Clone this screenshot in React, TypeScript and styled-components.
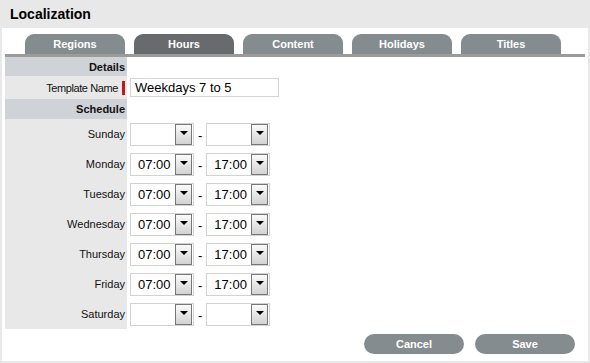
import { Fragment, useState } from "react";
import styled, { createGlobalStyle } from "styled-components";

const GlobalStyle = createGlobalStyle`
    html, body {
        margin: 0;
        padding: 0;
        background: #fff;
        font-family: "Liberation Sans", Arial, sans-serif;
    }
`

const Panel = styled.div`
    width: 590px;
    height: 363px;
    box-sizing: border-box;
    border: 2px solid #e8e8e8;
    border-top: none;
    display: flex;
    flex-direction: column;
    background: #fff;
`
const Header = styled.div`
    height: 28px;
    margin: 0 -2px;
    padding-left: 10px;
    background: #e8e8e8;
    font-size: 14px;
    font-weight: bold;
    line-height: 28px;
    color: #000;
`
const Content = styled.div`
    padding: 0 3px;
    display: flex;
    flex-direction: column;
`
const TabBar = styled.div`
    display: flex;
    gap: 9px;
    padding: 6px 0 0 20px;
    border-bottom: 3px solid #9b9b99;
`
const Tab = styled.div<{ $active?: boolean }>`
    width: 100px;
    height: 20px;
    border-radius: 9px 9px 0 0;
    background: ${(p) => (p.$active ? "#676b6e" : "#858c90")};
    color: #fff;
    font-size: 11px;
    font-weight: bold;
    line-height: 21px;
    text-align: center;
    cursor: pointer;
`
const Form = styled.div`
    display: grid;
    grid-template-columns: 122px 1fr;
`
const Label = styled.div<{ $section?: boolean; $h: number; $tight?: boolean }>`
    height: ${(p) => p.$h}px;
    background: ${(p) => (p.$section ? "#cfd2d6" : "#e8e8e8")};
    display: flex;
    align-items: center;
    justify-content: flex-end;
    gap: 4px;
    padding-right: 2px;
    font-size: 11px;
    font-weight: ${(p) => (p.$section ? "bold" : "normal")};
    letter-spacing: ${(p) => (p.$tight ? "-0.4px" : "0")};
    color: #111;
`
const Required = styled.span`
    width: 3px;
    height: 14px;
    background: #c0161c;
`
const Field = styled.div`
    display: flex;
    align-items: center;
    gap: 4px;
    padding-left: 3px;
`
const TextInput = styled.input`
    width: 149px;
    height: 19px;
    box-sizing: border-box;
    border: 1px solid #d4d4d4;
    padding: 0 4px;
    font-family: "Liberation Sans", Arial, sans-serif;
    font-size: 13px;
    color: #000;
    outline: none;
`
const Select = styled.div`
    width: 64px;
    height: 23px;
    box-sizing: border-box;
    border: 1px solid #d2d2d2;
    display: flex;
    align-items: center;
    background: #fff;
`
const SelectValue = styled.span`
    flex: 1;
    padding-left: 7px;
    font-size: 13px;
    color: #000;
`
const DropButton = styled.span`
    width: 17px;
    height: 21px;
    box-sizing: border-box;
    margin-right: 1px;
    border: 1px solid #777;
    background: linear-gradient(#fbfbfb, #d2d2d2);
    display: flex;
    align-items: center;
    justify-content: center;
    padding-bottom: 2px;

    &::after {
        content: "";
        border-left: 4px solid transparent;
        border-right: 4px solid transparent;
        border-top: 4px solid #000;
    }
`
const Dash = styled.span`
    font-size: 13px;
    padding-top: 3px;
    color: #000;
`
const Footer = styled.div`
    display: flex;
    justify-content: flex-end;
    gap: 11px;
    padding: 5px 10px 0 0;
`
const Button = styled.button`
    width: 100px;
    height: 20px;
    border: none;
    border-radius: 10px;
    background: #858c90;
    color: #fff;
    font-family: "Liberation Sans", Arial, sans-serif;
    font-size: 11px;
    font-weight: bold;
    padding: 0;
    cursor: pointer;
`

const tabs = ["Regions", "Hours", "Content", "Holidays", "Titles"]

const days = [
    { day: "Sunday", from: "", to: "" },
    { day: "Monday", from: "07:00", to: "17:00" },
    { day: "Tuesday", from: "07:00", to: "17:00" },
    { day: "Wednesday", from: "07:00", to: "17:00" },
    { day: "Thursday", from: "07:00", to: "17:00" },
    { day: "Friday", from: "07:00", to: "17:00" },
    { day: "Saturday", from: "", to: "" },
]

const TimeSelect = ({ value }: { value: string }) => (
    <Select>
        <SelectValue>{value}</SelectValue>
        <DropButton />
    </Select>
)

const App = () => {
    const [active, setActive] = useState("Hours")
    const [name, setName] = useState("Weekdays 7 to 5")

    return (
        <Panel>
            <GlobalStyle />
            <Header>Localization</Header>
            <Content>
                <TabBar>
                    {tabs.map((t) => (
                        <Tab key={t} $active={t === active} onClick={() => setActive(t)}>
                            {t}
                        </Tab>
                    ))}
                </TabBar>

                <Form>
                    <Label $section $h={19}>Details</Label>
                    <div />

                    <Label $h={23} $tight>
                        Template Name
                        <Required />
                    </Label>
                    <Field>
                        <TextInput value={name} onChange={(e: any) => setName(e.target.value)} />
                    </Field>

                    <Label $section $h={20}>Schedule</Label>
                    <div />

                    {days.map((d) => (
                        <Fragment key={d.day}>
                            <Label $h={30}>{d.day}</Label>
                            <Field>
                                <TimeSelect value={d.from} />
                                <Dash>-</Dash>
                                <TimeSelect value={d.to} />
                            </Field>
                        </Fragment>
                    ))}
                </Form>

                <Footer>
                    <Button>Cancel</Button>
                    <Button>Save</Button>
                </Footer>
            </Content>
        </Panel>
    )
}

export default App;
